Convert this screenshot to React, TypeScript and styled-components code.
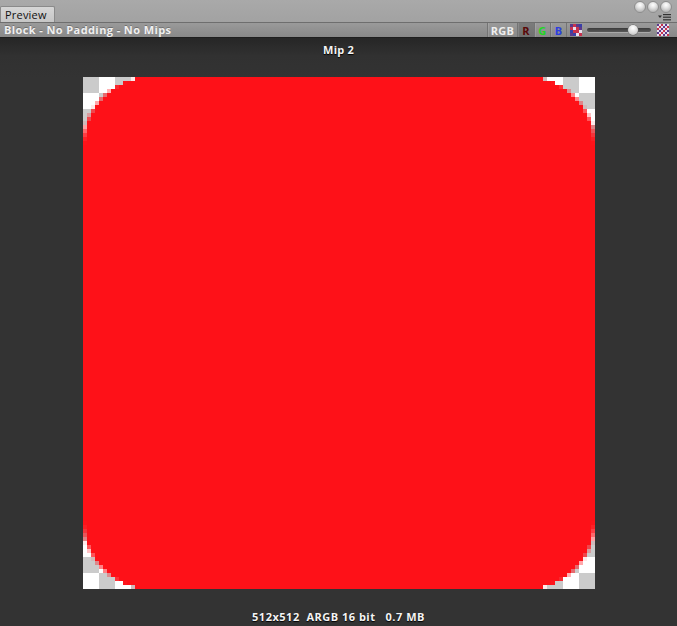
import React from "react";
import styled, { createGlobalStyle } from "styled-components";

const Global = createGlobalStyle`
  html, body { margin: 0; padding: 0; background: #333; overflow: hidden; }
  #root { width: 677px; height: 626px; }
`;

const Window = styled.div`
  width: 677px;
  height: 626px;
  display: flex;
  flex-direction: column;
  font-family: "Open Sans", "DejaVu Sans", sans-serif;
  font-size: 11px;
`;

const TabBar = styled.div`
  height: 22px;
  flex: none;
  background: linear-gradient(#a9a9a9, #a2a2a2);
  display: flex;
  align-items: flex-end;
  position: relative;
`;

const Tab = styled.div`
  height: 16px;
  width: 55px;
  box-sizing: border-box;
  border: 1px solid #8a8a8a;
  border-bottom: none;
  border-radius: 2px 2px 0 0;
  background: linear-gradient(#d6d6d6, #c6c6c6);
  color: #111;
  font-size: 11px;
  line-height: 15px;
  padding-left: 4px;
  letter-spacing: 0.2px;
`;

const WindowControls = styled.div`
  margin-left: auto;
  align-self: stretch;
  display: flex;
  flex-direction: column;
  align-items: flex-end;
  padding: 1px 5px 0 0;
  gap: 1px;
`;

const Dots = styled.div`
  display: flex;
  gap: 1px;
`;

const Dot = styled.div`
  width: 12px;
  height: 12px;
  border-radius: 50%;
  box-sizing: border-box;
  border: 1px solid #8d8d8d;
  background: radial-gradient(circle at 50% 30%, #ffffff 0, #e4e4e4 35%, #b9b9b9 75%, #d6d6d6 100%);
`;

const Toolbar = styled.div`
  height: 16px;
  flex: none;
  box-sizing: border-box;
  border-top: 1px solid #6e6e6e;
  border-bottom: 1px solid #1e1e1e;
  background: linear-gradient(#9a9a9a, #888888);
  display: flex;
  align-items: stretch;
`;

const Title = styled.div`
  color: #f0f0f0;
  font-weight: 700;
  font-size: 11px;
  line-height: 14px;
  padding-left: 4px;
  text-shadow: 0 -1px 0 rgba(0, 0, 0, 0.25);
  letter-spacing: 0.4px;
`;

const ToolGroup = styled.div`
  margin-left: auto;
  display: flex;
  align-items: stretch;
  padding-right: 6px;
`;

const ToolButton = styled.div<{ $color: string; $pressed?: boolean; $w: number }>`
  width: ${(p) => p.$w}px;
  box-sizing: border-box;
  display: flex;
  align-items: center;
  justify-content: center;
  font-weight: 700;
  font-size: 11px;
  letter-spacing: 0.3px;
  color: ${(p) => p.$color};
  background: ${(p) => (p.$pressed ? "linear-gradient(#7c7c7c, #707070)" : "transparent")};
  border-left: 1px solid #747474;
  box-shadow: inset 1px 0 0 rgba(255, 255, 255, 0.12);
`;

const IconCell = styled.div<{ $w: number; $plain?: boolean }>`
  width: ${(p) => p.$w}px;
  box-sizing: border-box;
  display: flex;
  align-items: center;
  justify-content: center;
  border-left: ${(p) => (p.$plain ? "none" : "1px solid #747474")};
`;

const SliderWrap = styled.div`
  width: 71px;
  box-sizing: border-box;
  display: flex;
  align-items: center;
  padding: 0 4px 0 3px;
`;

const Track = styled.div`
  flex: 1;
  height: 4px;
  border-radius: 2px;
  background: linear-gradient(#3a3a3a, #5a5a5a);
  box-shadow: 0 1px 0 rgba(255, 255, 255, 0.25);
  position: relative;
`;

const Thumb = styled.div`
  position: absolute;
  top: -3px;
  left: 41px;
  width: 10px;
  height: 10px;
  border-radius: 50%;
  background: radial-gradient(circle at 50% 30%, #ffffff, #d8d8d8 60%, #a8a8a8);
  box-shadow: 0 0 0 0.5px #666;
`;

const Content = styled.div`
  flex: 1;
  background: linear-gradient(#262626 0, #313131 18px, #333333 40px);
  display: flex;
  flex-direction: column;
  align-items: center;
`;

const Label = styled.div<{ $spacing: number }>`
  color: #f4f4f4;
  font-weight: 700;
  font-size: 11px;
  line-height: 14px;
  white-space: pre;
  letter-spacing: ${(p) => p.$spacing}px;
  text-shadow: 0 1px 1px #000;
`;

const MipLabel = styled(Label)`
  margin-top: 5px;
`;

const Caption = styled(Label)`
  margin-top: 21px;
`;

const Texture = styled.div`
  margin-top: 20px;
  width: 512px;
  height: 512px;
  flex: none;
  background: repeating-conic-gradient(#ffffff 0 25%, #cbcbcb 0 50%) 0 0 / 32px 32px;
`;

const RED = "#fe1118";

function RedBlock() {
  const N = 128;
  const r = 17;
  const rects: React.ReactElement[] = [];
  for (let i = 0; i < N; i++) {
    const yc = i + 0.5;
    let dy = 0;
    if (yc < r) dy = r - yc;
    else if (yc > N - r) dy = yc - (N - r);
    const inset = dy > 0 ? r - Math.sqrt(Math.max(0, r * r - dy * dy)) : 0;
    const full = Math.ceil(inset - 0.001);
    rects.push(<rect key={`f${i}`} x={full} y={i} width={N - 2 * full} height={1} fill={RED} />);
    const frac = full - inset;
    if (full > 0 && frac > 0.08) {
      rects.push(
        <rect key={`a${i}`} x={full - 1} y={i} width={1} height={1} fill={RED} fillOpacity={frac} />,
        <rect key={`b${i}`} x={N - full} y={i} width={1} height={1} fill={RED} fillOpacity={frac} />
      );
    }
    if (full > 1) {
      const frac2 = Math.max(0, (full - 1 - inset) * 0.35);
      if (frac2 > 0.05) {
        rects.push(
          <rect key={`c${i}`} x={full - 2} y={i} width={1} height={1} fill={RED} fillOpacity={frac2} />,
          <rect key={`d${i}`} x={N - full + 1} y={i} width={1} height={1} fill={RED} fillOpacity={frac2} />
        );
      }
    }
  }
  return (
    <svg width={512} height={512} viewBox="0 0 128 128" shapeRendering="crispEdges" style={{ display: "block" }}>
      {rects}
    </svg>
  );
}

function PixelIcon({ cells }: { cells: string[][] }) {
  const n = cells.length;
  return (
    <svg width={12} height={12} viewBox={`0 0 ${n} ${n}`} shapeRendering="crispEdges">
      {cells.map((row, y) =>
        row.map((c, x) => <rect key={`${x}-${y}`} x={x} y={y} width={1} height={1} fill={c} />)
      )}
    </svg>
  );
}

const P = "#5b3a8c";
const Rr = "#c8324e";
const W = "#e8e0ee";
const Bl = "#3a3fa8";

const icon1 = [
  [P, Rr, P, Bl],
  [Rr, W, Rr, P],
  [Bl, Rr, Rr, W],
  [P, Bl, W, Rr],
];

const icon2 = [
  [P, W, Rr, W, P, W],
  [W, Rr, W, P, W, Rr],
  [Rr, W, P, W, Rr, W],
  [W, P, W, Rr, W, P],
  [P, W, Rr, W, P, W],
  [W, Rr, W, P, W, Rr],
];

function MenuIcon() {
  return (
    <svg width={14} height={7} viewBox="0 0 14 7">
      <path d="M0 1.5 L4 1.5 L2 4 Z" fill="#333" />
      <rect x={5} y={0} width={8} height={1.2} fill="#333" />
      <rect x={5} y={2.6} width={8} height={1.2} fill="#333" />
      <rect x={5} y={5.2} width={8} height={1.2} fill="#333" />
    </svg>
  );
}

export default function App() {
  return (
    <>
      <Global />
      <Window>
        <TabBar>
          <Tab>Preview</Tab>
          <WindowControls>
            <Dots>
              <Dot />
              <Dot />
              <Dot />
            </Dots>
            <MenuIcon />
          </WindowControls>
        </TabBar>
        <Toolbar>
          <Title>Block - No Padding - No Mips</Title>
          <ToolGroup>
            <ToolButton $w={30} $color="#eeeeee">RGB</ToolButton>
            <ToolButton $w={17} $color="#5a0808" $pressed>R</ToolButton>
            <ToolButton $w={16} $color="#22d822">G</ToolButton>
            <ToolButton $w={16} $color="#2a3de0">B</ToolButton>
            <IconCell $w={18}>
              <PixelIcon cells={icon1} />
            </IconCell>
            <SliderWrap>
              <Track>
                <Thumb />
              </Track>
            </SliderWrap>
            <IconCell $w={16} $plain>
              <PixelIcon cells={icon2} />
            </IconCell>
          </ToolGroup>
        </Toolbar>
        <Content>
          <MipLabel $spacing={0.2}>Mip 2</MipLabel>
          <Texture>
            <RedBlock />
          </Texture>
          <Caption $spacing={0.5}>{"512x512  ARGB 16 bit   0.7 MB"}</Caption>
        </Content>
      </Window>
    </>
  );
}
